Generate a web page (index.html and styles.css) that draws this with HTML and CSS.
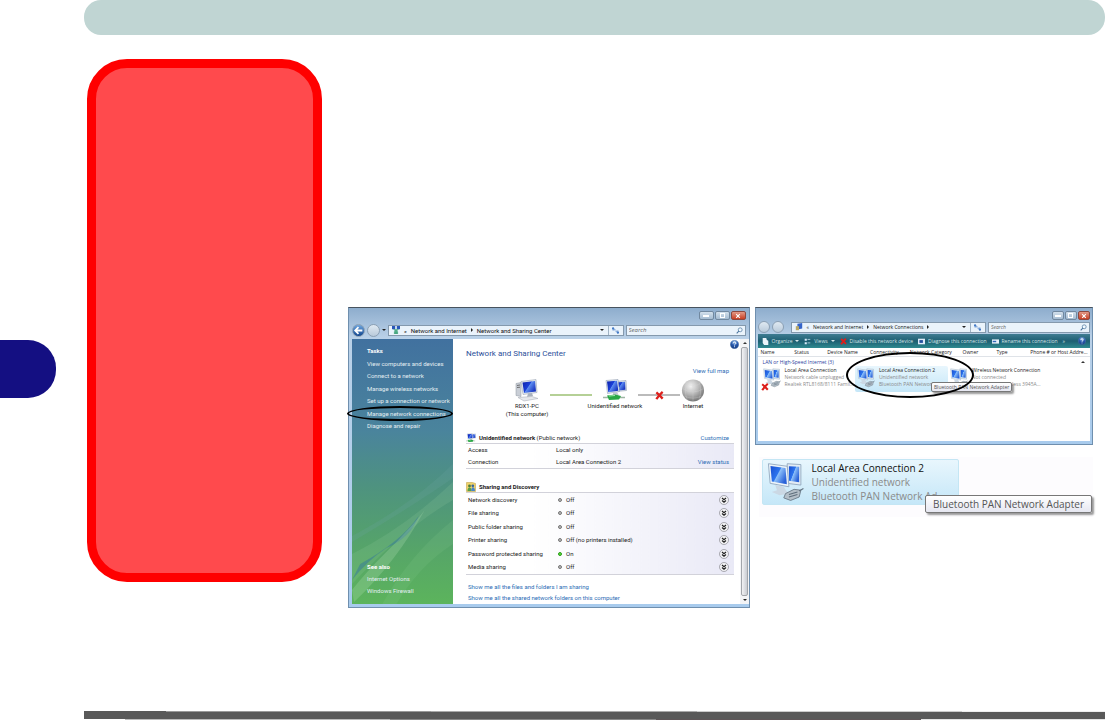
FILE: index.html
```
<!DOCTYPE html>
<html lang="en">
<head>
    <meta charset="UTF-8">
    <meta name="viewport" content="width=device-width, initial-scale=1.0">
    <title>Network Connections</title>
    <link rel="stylesheet" href="styles.css">
</head>
<body>

<!-- shared icons -->
<svg class="defs" aria-hidden="true">
    <defs>
        <linearGradient id="screen" x1="0" y1="0" x2="1" y2="0.6">
            <stop offset="0" stop-color="#0a1fa8"/>
            <stop offset="0.5" stop-color="#1b3fd8"/>
            <stop offset="0.55" stop-color="#5c8cf0"/>
            <stop offset="1" stop-color="#1a36c0"/>
        </linearGradient>
        <linearGradient id="screenLight" x1="0" y1="0" x2="1" y2="0.6">
            <stop offset="0" stop-color="#1a4fd0"/>
            <stop offset="0.5" stop-color="#2c74ee"/>
            <stop offset="0.55" stop-color="#8cc0fa"/>
            <stop offset="1" stop-color="#2a62d8"/>
        </linearGradient>
        <radialGradient id="ball" cx="0.4" cy="0.3" r="0.7">
            <stop offset="0" stop-color="#f2f2f2"/>
            <stop offset="0.5" stop-color="#bcbcbc"/>
            <stop offset="1" stop-color="#777"/>
        </radialGradient>
        <radialGradient id="blueBall" cx="0.5" cy="0.2" r="0.8">
            <stop offset="0" stop-color="#9cc4ee"/>
            <stop offset="0.5" stop-color="#2a5cae"/>
            <stop offset="1" stop-color="#123a80"/>
        </radialGradient>
        <symbol id="pc" viewBox="0 0 24 22">
            <path d="M1 4l5-1v14l-5-1z" fill="#c9ced6" stroke="#8d949e" stroke-width="0.5"/>
            <path d="M2 6l3-0.5M2 8l3-0.3" stroke="#555" stroke-width="0.8"/>
            <path d="M6 2l15-2 1 13-14 2z" fill="#e3e8ef" stroke="#8d98a8" stroke-width="0.5"/>
            <path d="M7.500 3l12.500-1.500 1 10.500-12 1.500z" fill="url(#screen)"/>
            <path d="M13 14l4-0.500 1 3-6 1z" fill="#aab2bd"/>
            <path d="M3 18l14-1 6 2-14 2.500z" fill="#e6e8ec" stroke="#a0a6b0" stroke-width="0.5"/>
        </symbol>
        <symbol id="netpair" viewBox="0 0 24 22">
            <path d="M12 2l11-1 0.500 10-10 1z" fill="#dfe6f0" stroke="#7f8ca0" stroke-width="0.5"/>
            <path d="M13 3l9-0.800 0.500 8-8 0.800z" fill="url(#screen)"/>
            <path d="M3 1l12-1 1.500 12-12 2z" fill="#e6ecf4" stroke="#7f8ca0" stroke-width="0.5"/>
            <path d="M4 2l10-0.800 1.300 10-10 1.500z" fill="url(#screen)"/>
            <path d="M10 13l4-0.500 2 3.500-6 1z" fill="#c0c7d0"/>
            <path d="M0 18h22" stroke="#9fb6a4" stroke-width="1.500"/>
            <path d="M4 16l8-1 6 1.500-2 3.500-10 0.500z" fill="#28a745"/>
            <path d="M6 16.500l6-0.500" stroke="#9fe8a8" stroke-width="1"/>
        </symbol>
        <symbol id="lan" viewBox="0 0 24 24">
            <path d="M13 1l8 0.500v12l-8-1z" fill="#e3ecf4" stroke="#8ea4bc" stroke-width="0.500"/>
            <path d="M14 2.500l6 0.300v9l-6-0.800z" fill="url(#screenLight)"/>
            <path d="M2 1l11 1.500 1 12-11-2z" fill="#edf4fa" stroke="#8ea4bc" stroke-width="0.500"/>
            <path d="M3.200 2.300l8.800 1.200 0.800 9.500-8.800-1.600z" fill="url(#screenLight)"/>
            <path d="M6 13.500l5 1 1.500 2.500 2 1.500-6 1-4.500-2 3-1z" fill="#cbd8e4"/>
            <path d="M12 18.500l5-2.500 4 0.500-1 4-5 2-4-1.500z" fill="#b4bfc8" stroke="#667684" stroke-width="0.500"/>
            <path d="M14 19l5-1.500M14 20.500l5-1.500M20 17l2.500-1.500" stroke="#5e6e7c" stroke-width="0.600" fill="none"/>
        </symbol>
        <symbol id="cross" viewBox="0 0 10 10">
            <path d="M1.500 1.500q3 2.500 7 7M8.500 1q-4 3.500-7 8" stroke="#dc1f1b" stroke-width="2.600" fill="none"/>
        </symbol>
        <symbol id="globe" viewBox="0 0 24 24">
            <circle cx="12" cy="12" r="11.500" fill="url(#ball)"/>
            <path d="M1 10q11 7 22 0M4 4.500q8 5 16 0M3 18q9 4 18 0M12 0.500v23M6 2q-4 10 0 20M18 2q4 10 0 20" stroke="#d9d9d9" stroke-width="0.500" fill="none" opacity="0.600"/>
        </symbol>
        <symbol id="help" viewBox="0 0 10 10">
            <circle cx="5" cy="5" r="4.700" fill="url(#blueBall)" stroke="#5c80b4" stroke-width="0.500"/>
            <path d="M3.500 3.800q0-1.500 1.500-1.500t1.500 1.300q0 0.800-1.500 1.800v0.600M5 7v1" stroke="#fff" stroke-width="1" fill="none"/>
        </symbol>
        <symbol id="lens" viewBox="0 0 10 10">
            <circle cx="6" cy="4" r="2.800" fill="#f2f9ff" stroke="#47729c" stroke-width="1"/>
            <path d="M4 6l-3 3" stroke="#47729c" stroke-width="1.500"/>
        </symbol>
        <symbol id="refresh" viewBox="0 0 10 10">
            <path d="M1.500 5V2.500M0 2.500l1.500-2 1.500 2zM2 4h3" stroke="#2f6cc0" stroke-width="1" fill="#2f6cc0"/>
            <path d="M8.500 5v2.500M7 7.500l1.500 2 1.500-2zM8 6H5" stroke="#2f6cc0" stroke-width="1" fill="#2f6cc0"/>
        </symbol>
        <symbol id="chevron" viewBox="0 0 10 10">
            <circle cx="5" cy="5" r="4.500" fill="#f4f4f6" stroke="#8a8a92" stroke-width="0.700"/>
            <path d="M3 3l2 1.700 2-1.700M3 5.500l2 1.700 2-1.700" stroke="#222" stroke-width="1.200" fill="none"/>
        </symbol>
        <symbol id="people" viewBox="0 0 10 10">
            <path d="M0.500 0.500h6l3 1v8h-9z" fill="#f0d36c" stroke="#b89a3c" stroke-width="0.500"/>
            <circle cx="3.500" cy="4" r="1.400" fill="#4c7a3c"/>
            <circle cx="6.800" cy="3.800" r="1.400" fill="#3a679c"/>
            <path d="M1.500 9q0-3.500 2-3.500t2 3.500z" fill="#58a048"/>
            <path d="M5.200 9q0-3.700 1.800-3.700t2 3.700z" fill="#4a86c8"/>
        </symbol>
    </defs>
</svg>

<header class="topbar"></header>

<main class="page">
    <div class="tab"></div>
    <aside class="notice"></aside>

    <div class="figures">
        <section class="window large">
            <div class="titlebar">
                <button type="button" class="winbtn" aria-label="Minimize"><i class="min"></i></button>
                <button type="button" class="winbtn" aria-label="Maximize"><i class="max"></i></button>
                <button type="button" class="winbtn close" aria-label="Close"><svg viewBox="0 0 10 10"><path d="M2 2l6 6M8 2l-6 6" stroke="#fff" stroke-width="2"/></svg></button>
            </div>
            <div class="navbar">
                <button type="button" class="round blue" aria-label="Back"><svg viewBox="0 0 10 10"><path d="M8.500 5h-6M5 2l-3 3 3 3" stroke="#fff" stroke-width="1.600" fill="none"/></svg></button>
                <button type="button" class="round" aria-label="Forward"></button>
                <i class="arrow dark"></i>
                <div class="address">
                    <svg class="addricon" viewBox="0 0 10 10"><path d="M0 0h4v4H0zM6 0h4v4H6z" fill="#2858b8"/><path d="M2 4l3 3 3-3M3 7h4v3H3z" fill="#4aa882" stroke="#4aa882"/></svg>
                    <span>«</span><a href="#">Network and Internet</a><i class="crumb"></i><a href="#">Network and Sharing Center</a>
                    <i class="arrow push"></i>
                    <button type="button" class="refresh" aria-label="Refresh"><svg><use href="#refresh"/></svg></button>
                </div>
                <label class="search"><input type="text" placeholder="Search" aria-label="Search"><svg><use href="#lens"/></svg></label>
            </div>

            <div class="center">
                <nav class="tasks">
                    <svg class="swoosh" viewBox="0 0 100 160" preserveAspectRatio="none" aria-hidden="true">
                        <path d="M0 92Q60 60 100 20V34Q60 62 0 98z" fill="#6fa7a5" opacity="0.200"/>
                        <path d="M0 110Q52 84 100 38V56Q52 84 0 140z" fill="#94cda0" opacity="0.180"/>
                        <path d="M8 120Q48 98 66 72Q58 94 34 104Q16 116 0 136z" fill="#2e71a0" opacity="0.450"/>
                        <path d="M2 158Q44 118 72 66Q60 82 34 108Q14 128 0 146z" fill="#b9e2b9" opacity="0.250"/>
                        <path d="M30 160Q56 112 100 76V100Q66 122 44 160z" fill="#8fd092" opacity="0.150"/>
                    </svg>
                    <div class="tasklist">
                        <strong>Tasks</strong>
                        <a href="#">View computers and devices</a>
                        <a href="#">Connect to a network</a>
                        <a href="#">Manage wireless networks</a>
                        <a href="#">Set up a connection or network</a>
                        <a href="#">Manage network connections</a>
                        <a href="#">Diagnose and repair</a>
                    </div>
                    <div class="seealso">
                        <strong>See also</strong>
                        <a href="#">Internet Options</a>
                        <a href="#">Windows Firewall</a>
                    </div>
                </nav>

                <div class="content">
                    <svg class="helpicon"><use href="#help"/></svg>
                    <h1>Network and Sharing Center</h1>
                    <a href="#" class="fullmap">View full map</a>
                    <div class="map">
                        <div class="node"><svg><use href="#pc"/></svg>RDX1-PC<br>(This computer)</div>
                        <div class="wire good"></div>
                        <div class="node"><svg><use href="#netpair"/></svg>Unidentified network</div>
                        <div class="wire"><svg><use href="#cross"/></svg></div>
                        <div class="node"><svg><use href="#globe"/></svg>Internet</div>
                    </div>

                    <div class="sechead">
                        <svg><use href="#netpair"/></svg>
                        <h2>Unidentified network <span>(Public network)</span></h2>
                        <a href="#">Customize</a>
                    </div>
                    <table class="network">
                        <tr><th>Access</th><td>Local only</td><td></td></tr>
                        <tr><th>Connection</th><td>Local Area Connection 2</td><td><a href="#">View status</a></td></tr>
                    </table>

                    <div class="sechead">
                        <svg><use href="#people"/></svg>
                        <h2>Sharing and Discovery</h2>
                    </div>
                    <table class="sharing">
                        <tr><th>Network discovery</th><td><i class="dot"></i>Off</td><td><button type="button" aria-label="Expand network discovery"><svg><use href="#chevron"/></svg></button></td></tr>
                        <tr><th>File sharing</th><td><i class="dot"></i>Off</td><td><button type="button" aria-label="Expand file sharing"><svg><use href="#chevron"/></svg></button></td></tr>
                        <tr><th>Public folder sharing</th><td><i class="dot"></i>Off</td><td><button type="button" aria-label="Expand public folder sharing"><svg><use href="#chevron"/></svg></button></td></tr>
                        <tr><th>Printer sharing</th><td><i class="dot"></i>Off (no printers installed)</td><td><button type="button" aria-label="Expand printer sharing"><svg><use href="#chevron"/></svg></button></td></tr>
                        <tr><th>Password protected sharing</th><td><i class="dot on"></i>On</td><td><button type="button" aria-label="Expand password protected sharing"><svg><use href="#chevron"/></svg></button></td></tr>
                        <tr><th>Media sharing</th><td><i class="dot"></i>Off</td><td><button type="button" aria-label="Expand media sharing"><svg><use href="#chevron"/></svg></button></td></tr>
                    </table>
                    <div class="more">
                        <a href="#">Show me all the files and folders I am sharing</a>
                        <a href="#">Show me all the shared network folders on this computer</a>
                    </div>
                </div>
                <div class="scrollbar"><i class="up"></i><span class="thumb"></span><i class="arrow"></i></div>
            </div>
            <div class="ring ring-task"></div>
        </section>

        <div class="right">
            <section class="window small">
                <div class="titlebar">
                    <button type="button" class="winbtn" aria-label="Minimize"><i class="min"></i></button>
                    <button type="button" class="winbtn" aria-label="Maximize"><i class="max"></i></button>
                    <button type="button" class="winbtn close" aria-label="Close"><svg viewBox="0 0 10 10"><path d="M2 2l6 6M8 2l-6 6" stroke="#fff" stroke-width="2"/></svg></button>
                </div>
                <div class="navbar">
                    <button type="button" class="round" aria-label="Back"></button>
                    <button type="button" class="round" aria-label="Forward"></button>
                    <div class="address">
                        <svg class="addricon" viewBox="0 0 10 10"><path d="M3 1l6-1v7l-6 1z" fill="#3564c8"/><path d="M1 4h4v5H1z" fill="#b8a868"/></svg>
                        <span>«</span><a href="#">Network and Internet</a><i class="crumb"></i><a href="#">Network Connections</a><i class="crumb"></i>
                        <i class="arrow push"></i>
                        <button type="button" class="refresh" aria-label="Refresh"><svg><use href="#refresh"/></svg></button>
                    </div>
                    <label class="search"><input type="text" placeholder="Search" aria-label="Search"><svg><use href="#lens"/></svg></label>
                </div>
                <div class="toolbar">
                    <button type="button"><svg viewBox="0 0 10 10"><path d="M1 0h5l1 3 2 1v6H3L1 7z" fill="#eaf4fa"/></svg>Organize<i class="arrow"></i></button>
                    <button type="button"><svg viewBox="0 0 10 10"><path d="M1 1h3v3H1zM1 6h3v3H1z" fill="#d8ecfa"/><path d="M5 2h4M5 7h4" stroke="#d8ecfa"/></svg>Views<i class="arrow"></i></button>
                    <button type="button"><svg><use href="#cross"/></svg>Disable this network device</button>
                    <button type="button"><svg viewBox="0 0 10 10"><path d="M0 1h10v8H0z" fill="#dceaf8"/><path d="M2 3h5v4H2z" fill="#24509c"/></svg>Diagnose this connection</button>
                    <button type="button"><svg viewBox="0 0 10 10"><path d="M0 2h10v6H0z" fill="#e6f0fa"/><path d="M1 4h5v2H1z" fill="#2f68b8"/></svg>Rename this connection</button>
                    <span>»</span>
                    <svg class="tbhelp"><use href="#help"/></svg>
                </div>
                <div class="pane">
                    <div class="cols">
                        <span>Name</span><span>Status</span><span>Device Name</span><span>Connectivity</span><span>Network Category</span><span>Owner</span><span>Type</span><span>Phone # or Host Addre...</span>
                    </div>
                    <div class="group"><span>LAN or High-Speed Internet (3)</span><i class="up"></i></div>
                    <div class="items">
                        <div class="item">
                            <svg><use href="#lan"/></svg><svg class="fail"><use href="#cross"/></svg>
                            <p>Local Area Connection<br><span>Network cable unplugged<br>Realtek RTL8168/8111 Famil...</span></p>
                        </div>
                        <div class="item selected">
                            <svg><use href="#lan"/></svg>
                            <p>Local Area Connection 2<br><span>Unidentified network<br>Bluetooth PAN Network Ad...</span></p>
                            <div class="tip">Bluetooth PAN Network Adapter</div>
                        </div>
                        <div class="item">
                            <svg><use href="#lan"/></svg><svg class="fail"><use href="#cross"/></svg>
                            <p>Wireless Network Connection<br><span>Not connected<br>Intel(R) PRO/Wireless 3945A...</span></p>
                        </div>
                    </div>
                </div>
                <div class="ring ring-conn"></div>
            </section>

            <div class="closeup">
                <div class="item selected">
                    <svg><use href="#lan"/></svg>
                    <p>Local Area Connection 2<br><span>Unidentified network<br>Bluetooth PAN Network Ad...</span></p>
                </div>
                <div class="tip">Bluetooth PAN Network Adapter</div>
            </div>
        </div>
    </div>
</main>

<footer class="footbar"></footer>

</body>
</html>
```

FILE: styles.css
```
* {
    box-sizing: border-box;
}
body {
    font-family: "Open Sans", "Noto Sans", sans-serif;
    font-size: 6px;
    margin: 0;
    min-height: 100vh;
    background-color: #fff;
    color: #222;
    display: flex;
    flex-direction: column;
}
h1, h2, p {
    margin: 0;
    font-weight: normal;
}
a {
    color: #2a6cb5;
    text-decoration: none;
}
button {
    font: inherit;
    color: inherit;
    border: none;
    padding: 0;
    background: none;
    cursor: pointer;
}
svg {
    display: block;
    flex: none;
}
.defs {
    position: absolute;
    width: 0;
    height: 0;
}

/* page frame */
.topbar {
    height: 35px;
    margin: 0 1px 0 84px;
    border-radius: 17px;
    background-color: #c0d5d3;
}
.page {
    flex: 1;
    display: grid;
    grid-template-columns: 87px 235px minmax(0, 1fr);
    align-items: start;
    padding-top: 24px;
}
.tab {
    width: 56px;
    height: 58px;
    margin-top: 281px;
    border-radius: 0 28px 28px 0;
    background-color: #140f82;
}
.notice {
    height: 523px;
    border: 9px solid #f00;
    border-radius: 40px;
    background-color: #ff4a4d;
}
.figures {
    display: grid;
    grid-template-columns: minmax(0, 401fr) minmax(0, 338fr);
    gap: 5px;
    align-items: start;
    padding: 248px 13px 0 26px;
}
.footbar {
    height: 9px;
    margin: 0 1px 1px 84px;
    background:
        linear-gradient(90deg, #595959 8%, #999 8% 34%, #aaa 34% 60%, #ccc 60% 86%, #eee 86%) top / 100% 1px no-repeat,
        linear-gradient(90deg, #fff 4%, #bbb 4% 30%, #888 30% 56%, #5e5658 56% 82%, #e4e4e4 82%) bottom / 100% 1px no-repeat,
        #595959;
}

/* windows */
.window {
    position: relative;
    padding: 3px;
    border: 1px solid #6f8fae;
    border-top-color: #48535e;
    background: linear-gradient(#8eadcd, #bad1e8 30px, #a8cbed);
}
.large {
    font-family: Roboto, "Open Sans", sans-serif;
}
.titlebar {
    display: flex;
    justify-content: flex-end;
    gap: 1px;
    height: 11px;
}
.winbtn {
    width: 15px;
    height: 9px;
    border: 1px solid #71889f;
    border-radius: 2px;
    background: linear-gradient(#d3e0ec, #a5bcd2);
    display: flex;
    align-items: center;
    justify-content: center;
}
.winbtn.close {
    background: linear-gradient(#e39a88, #c83e24);
    border-color: #8c4840;
}
.winbtn svg {
    width: 6px;
    height: 6px;
}
.min {
    width: 6px;
    height: 2px;
    background-color: #fff;
}
.max {
    width: 5px;
    height: 5px;
    border: 1px solid #fff;
}
.navbar {
    display: flex;
    align-items: center;
    gap: 2px;
    height: 16px;
}
.round {
    width: 13px;
    height: 13px;
    border: 1px solid #8ca0b4;
    border-radius: 50%;
    background: linear-gradient(#dfe9f2, #b9cada);
    flex: none;
}
.round.blue {
    background: linear-gradient(#6fa6de, #12468e);
}
.address {
    flex: 1;
    display: flex;
    align-items: center;
    gap: 4px;
    height: 11px;
    padding-left: 3px;
    border: 1px solid #8499ad;
    background-color: #eaf3fb;
    white-space: nowrap;
}
.address a {
    color: #111;
}
.addricon {
    width: 8px;
    height: 8px;
}
.crumb {
    border: 2px solid transparent;
    border-left-color: #222;
    border-right: none;
}
.arrow {
    border: 2px solid transparent;
    border-top-color: currentColor;
    border-bottom: none;
    flex: none;
}
.up {
    border: 2px solid transparent;
    border-bottom-color: #333;
    border-top: none;
}
.push {
    margin-left: auto;
}
.refresh {
    width: 15px;
    height: 9px;
    border-left: 1px solid #9fb2c4;
    display: flex;
    align-items: center;
    justify-content: center;
}
.refresh svg {
    width: 7px;
    height: 7px;
}
.search {
    display: flex;
    align-items: center;
    width: 120px;
    height: 11px;
    padding: 0 2px;
    border: 1px solid #8499ad;
    background-color: #eaf3fb;
}
.search input {
    flex: 1;
    min-width: 0;
    height: 9px;
    padding: 0;
    border: none;
    background: none;
    font: italic 6px "Open Sans", sans-serif;
}
.search input::placeholder {
    color: #666;
}
.search svg {
    width: 7px;
    height: 7px;
}
.ring {
    position: absolute;
    border: 2px solid #000;
    border-radius: 50%;
}

/* network and sharing center */
.center {
    display: flex;
    height: 265px;
    margin-top: 1px;
    background-color: #fff;
}
.tasks {
    position: relative;
    flex: none;
    display: flex;
    flex-direction: column;
    justify-content: space-between;
    width: 101px;
    padding: 6px 0 7px 15px;
    line-height: 12px;
    white-space: nowrap;
    color: #fff;
    background: linear-gradient(#41719f, #4a849c 35%, #4e9280 55%, #56a568 80%, #5cb45c);
}
.tasks a {
    color: #e4eef2;
}
.tasklist, .seealso {
    position: relative;
    display: flex;
    flex-direction: column;
    justify-content: space-between;
}
.tasklist {
    height: 87px;
}
.swoosh {
    position: absolute;
    left: 0;
    bottom: 0;
    width: 100%;
    height: 160px;
}
.ring-task {
    left: -2px;
    top: 98px;
    width: 106px;
    height: 15px;
}
.content {
    position: relative;
    flex: 1;
    padding: 9px 6px 0 13px;
}
.helpicon {
    position: absolute;
    right: 1px;
    top: 1px;
    width: 9px;
    height: 9px;
}
h1 {
    font-size: 8px;
    line-height: 12px;
    color: #2c4f9a;
}
.fullmap {
    display: block;
    margin-top: 5px;
    padding-right: 5px;
    text-align: right;
    line-height: 12px;
}
.map {
    display: flex;
    height: 53px;
    margin: 2px 0 0 38px;
    justify-content: space-between;
    padding-right: 28px;
}
.node {
    display: flex;
    flex-direction: column;
    align-items: center;
    text-align: center;
    line-height: 8px;
    white-space: nowrap;
    width: 46px;
}
.node:last-child {
    width: 26px;
}
.node svg {
    width: 24px;
    height: 23px;
}
.wire {
    flex: none;
    display: flex;
    align-items: center;
    justify-content: center;
    width: 42px;
    height: 2px;
    margin-top: 15px;
    background-color: #bbb;
}
.wire.good {
    background-color: #b5d096;
}
.wire svg {
    width: 9px;
    height: 9px;
}
.sechead {
    display: flex;
    align-items: center;
    gap: 3px;
    height: 11px;
    padding-right: 5px;
}
.sechead svg {
    width: 10px;
    height: 10px;
}
.sechead h2 {
    font-size: 6px;
    font-weight: bold;
}
.sechead h2 span {
    font-weight: normal;
}
.sechead a {
    margin-left: auto;
}
table {
    width: 100%;
    border-collapse: collapse;
    table-layout: fixed;
    border-top: 1px solid #d2d2da;
    border-bottom: 1px solid #d2d2da;
    background: linear-gradient(90deg, #fff 25%, #e9e9f6);
    white-space: nowrap;
}
th, td {
    padding: 0 0 0 2px;
    line-height: 8px;
    text-align: left;
    font-weight: normal;
}
th {
    width: 88px;
}
td:last-child {
    width: 40px;
    padding-right: 5px;
    text-align: right;
}
.network {
    height: 26px;
    margin-bottom: 12px;
}
.sharing {
    height: 83px;
}
.sharing button {
    display: block;
    margin-left: auto;
}
.sharing svg {
    width: 10px;
    height: 10px;
}
.dot {
    display: inline-block;
    width: 4px;
    height: 4px;
    margin: 0 4px 0 2px;
    border: 1px solid #777;
    border-radius: 50%;
    background-color: #bbb;
}
.dot.on {
    border-color: #2c9a1c;
    background-color: #5be03c;
}
.more {
    display: flex;
    flex-direction: column;
    padding: 6px 0 0 2px;
    line-height: 11px;
}
.scrollbar {
    display: flex;
    flex-direction: column;
    align-items: center;
    justify-content: space-between;
    width: 9px;
    padding: 3px 1px;
    background-color: #f3f4f6;
}
.thumb {
    flex: 1;
    width: 7px;
    margin: 3px 0;
    border: 1px solid #a2a5aa;
    border-radius: 2px;
    background: linear-gradient(90deg, #f2f2f4, #c9ccd2);
}

/* network connections */
.small {
    font-size: 5px;
    padding: 3px 2px;
}
.small .titlebar {
    height: 9px;
}
.small .winbtn {
    width: 12px;
}
.small .navbar {
    height: 14px;
}
.small .round {
    width: 12px;
    height: 12px;
}
.small .address {
    margin-left: 5px;
}
.small .search {
    width: 102px;
}
.small .search input {
    font-size: 5px;
}
.toolbar {
    display: flex;
    align-items: center;
    justify-content: space-between;
    height: 14px;
    padding: 0 4px;
    color: #d6e8ea;
    white-space: nowrap;
    background: linear-gradient(#3f7c92, #1d5f72 50%, #2e8a90);
}
.toolbar button {
    display: flex;
    align-items: center;
    gap: 3px;
}
.toolbar svg {
    width: 7px;
    height: 7px;
}
.toolbar .tbhelp {
    width: 8px;
    height: 8px;
    margin-left: 8px;
}
.pane {
    height: 93px;
    background-color: #fff;
}
.cols {
    display: grid;
    grid-template-columns: 34fr 33fr 43fr 40fr 53fr 34fr 34fr 60fr;
    height: 9px;
    padding-left: 3px;
    line-height: 8px;
    white-space: nowrap;
    border-bottom: 1px solid #dfe3e8;
}
.group {
    display: flex;
    align-items: center;
    justify-content: space-between;
    height: 9px;
    padding: 0 5px;
    color: #2b3fa0;
}
.items {
    display: grid;
    grid-template-columns: 94fr 94fr 144fr;
    padding-left: 3px;
}
.item {
    position: relative;
    display: flex;
    gap: 3px;
    height: 26px;
    padding: 1px;
    line-height: 7px;
    white-space: nowrap;
}
.item span {
    color: #8a8a8a;
}
.item svg {
    width: 20px;
    height: 22px;
}
.item .fail {
    position: absolute;
    left: 0;
    bottom: 1px;
    width: 8px;
    height: 8px;
}
.selected {
    border-radius: 2px;
    background: linear-gradient(#e8f6fd, #c5e7f8);
}
.tip {
    position: absolute;
    border: 1px solid #777;
    border-radius: 2px;
    background: linear-gradient(#fff, #e6e7f1);
    box-shadow: 2px 2px 2px rgba(0, 0, 0, 0.4);
    color: #555;
    white-space: nowrap;
}
.items .tip {
    left: 76px;
    top: 16px;
    padding: 0 2px;
    line-height: 8px;
    z-index: 1;
}
.ring-conn {
    left: 90px;
    top: 44px;
    width: 128px;
    height: 46px;
    z-index: 2;
}

/* enlarged connection */
.closeup {
    position: relative;
    height: 60px;
    margin: 12px 0 0 4px;
    padding: 2px 3px;
    background-color: #fdfcfe;
}
.closeup .item {
    width: 197px;
    height: 46px;
    gap: 6px;
    padding: 1px 2px;
    border: 1px solid #c4e6f4;
    font-size: 10px;
    line-height: 14px;
}
.closeup .item p {
    color: #111;
}
.closeup .item svg {
    width: 41px;
    height: 43px;
}
.closeup .tip {
    right: 1px;
    top: 38px;
    padding: 0 7px;
    font-size: 10px;
    line-height: 16px;
}
```
